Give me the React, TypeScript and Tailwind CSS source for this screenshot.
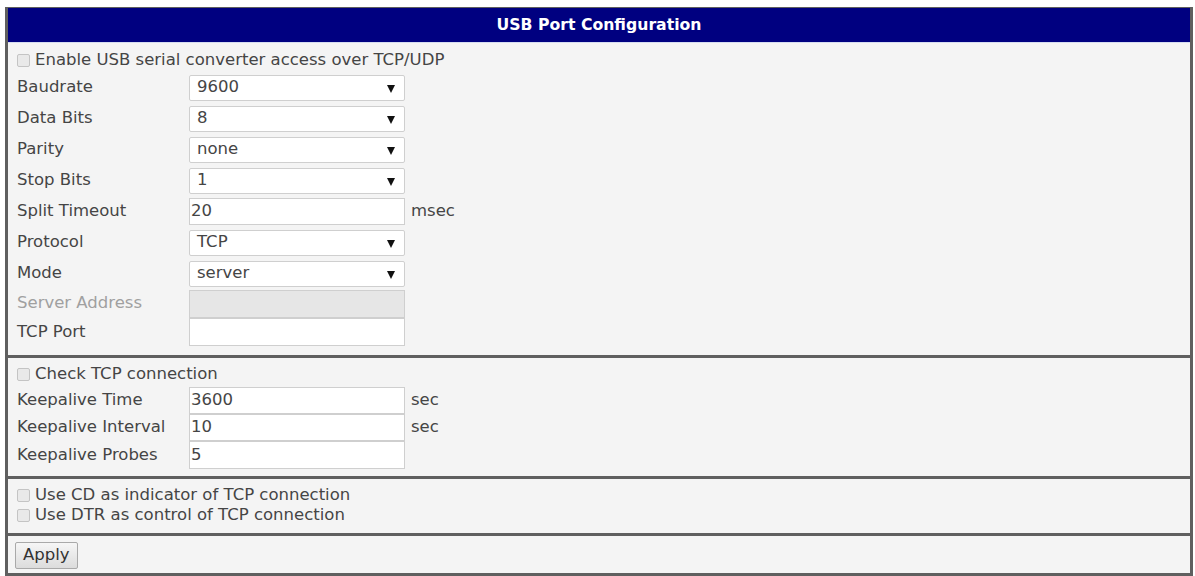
import { ReactNode } from "react";

const font = "font-['DejaVu_Sans',Verdana,sans-serif]";

function Check({ label }: { label: string }) {
  return (
    <div className="flex items-center h-[20px]">
      <span className="inline-block w-[13px] h-[13px] border border-[#c4c4c4] bg-[#e9e9e9] rounded-[2px]" />
      <span className="ml-[5px]">{label}</span>
    </div>
  );
}

function Arrow() {
  return (
    <svg width="8" height="8" viewBox="0 0 8 8" className="absolute right-[9px] top-[9px]">
      <path d="M0 0 H8 L4 8 Z" fill="#111" />
    </svg>
  );
}

function Row({
  label,
  children,
  unit,
  h = "h-[31px]",
  muted = false,
}: {
  label: string;
  children: ReactNode;
  unit?: string;
  h?: string;
  muted?: boolean;
}) {
  return (
    <div className={`flex items-center ${h}`}>
      <div className={`w-[172px] ${muted ? "text-[#a0a0a0]" : ""}`}>{label}</div>
      {children}
      {unit && <span className="ml-[6px]">{unit}</span>}
    </div>
  );
}

function Select({ value }: { value: string }) {
  return (
    <div className="relative w-[216px] h-[26px] bg-white border border-[#cfcfcf] rounded-[2px] flex items-center pl-[7px]">
      {value}
      <Arrow />
    </div>
  );
}

function Input({ value = "", disabled = false, h = "h-[27px]" }: { value?: string; disabled?: boolean; h?: string }) {
  return (
    <div
      className={`w-[216px] ${h} border border-[#cfcfcf] flex items-center pl-[1px] ${
        disabled ? "bg-[#e6e6e6]" : "bg-white"
      }`}
    >
      {value}
    </div>
  );
}

export default function App() {
  return (
    <div className={`min-h-screen bg-white pt-[7px] pl-[5px] ${font} text-[16.5px] text-[#454545]`}>
      <div className="w-[1188px] border-[3px] border-[#5f5f5f] border-t-[1px] bg-[#f4f4f4]">
        {/* title bar */}
        <div className="h-[35px] bg-[#000080] border-b border-[#d6dcf0] flex items-center justify-center text-white font-bold text-[15.7px]">
          USB Port Configuration
        </div>

        {/* serial / socket settings */}
        <div className="pl-[9px] pt-[5px] pb-[9px] border-b-[3px] border-[#5f5f5f]">
          <div className="flex items-center h-[24px]">
            <Check label="Enable USB serial converter access over TCP/UDP" />
          </div>
          <Row label="Baudrate"><Select value="9600" /></Row>
          <Row label="Data Bits"><Select value="8" /></Row>
          <Row label="Parity"><Select value="none" /></Row>
          <Row label="Stop Bits"><Select value="1" /></Row>
          <Row label="Split Timeout" unit="msec"><Input value="20" /></Row>
          <Row label="Protocol"><Select value="TCP" /></Row>
          <Row label="Mode"><Select value="server" /></Row>
          <Row label="Server Address" h="h-[29px]" muted><Input disabled h="h-[28px]" /></Row>
          <Row label="TCP Port" h="h-[28px]"><Input h="h-[28px]" /></Row>
        </div>

        {/* keepalive */}
        <div className="pl-[9px] pt-[3px] pb-[7px] border-b-[3px] border-[#5f5f5f]">
          <div className="flex items-center h-[26px]">
            <Check label="Check TCP connection" />
          </div>
          <Row label="Keepalive Time" unit="sec" h="h-[27px]"><Input value="3600" /></Row>
          <Row label="Keepalive Interval" unit="sec" h="h-[27px]"><Input value="10" /></Row>
          <Row label="Keepalive Probes" h="h-[28px]"><Input value="5" h="h-[28px]" /></Row>
        </div>

        {/* modem lines */}
        <div className="pl-[9px] pt-[6px] pb-[8px] border-b-[3px] border-[#5f5f5f]">
          <Check label="Use CD as indicator of TCP connection" />
          <Check label="Use DTR as control of TCP connection" />
        </div>

        <div className="pl-[7px] pt-[6px] pb-[4px]">
          <button className="h-[27px] px-[7px] border border-[#a9a9a9] rounded-[2px] bg-gradient-to-b from-[#f6f6f6] to-[#dcdcdc] text-[#333]">
            Apply
          </button>
        </div>
      </div>
    </div>
  );
}
